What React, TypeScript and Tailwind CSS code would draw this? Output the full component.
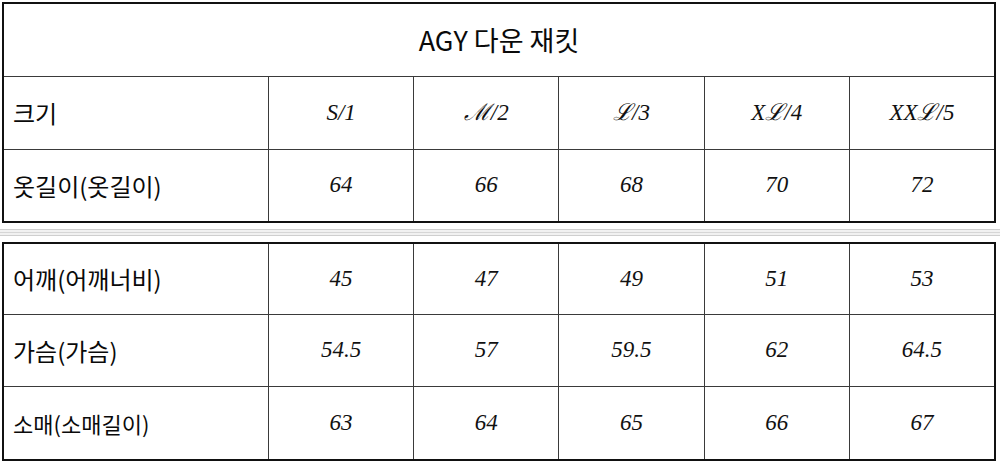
import React from 'react';

const sizes = ['S/1', 'ℳ/2', 'ℒ/3', 'Xℒ/4', 'XXℒ/5'];

const topRows = [{ label: '옷길이(옷길이)', values: ['64', '66', '68', '70', '72'] }];

const bottomRows = [
    { label: '어깨(어깨너비)', values: ['45', '47', '49', '51', '53'], h: 'h-[71px]' },
    { label: '가슴(가슴)', values: ['54.5', '57', '59.5', '62', '64.5'], h: 'h-[72px]' },
    { label: '소매(소매길이)', values: ['63', '64', '65', '66', '67'], h: 'h-[72px]', small: true },
];

const sans = "font-['Noto_Sans_CJK_KR','Noto_Sans',sans-serif]";
const serif = "font-['Liberation_Serif','DejaVu_Serif',serif] italic";

const Row: React.FC<{ label: string; values: string[]; h: string; last?: boolean; small?: boolean }> = ({
    label,
    values,
    h,
    last = false,
    small = false,
}) => (
    <div className={`grid grid-cols-[264px_repeat(5,1fr)] ${h} ${last ? '' : 'border-b border-[#3a3a3a]'}`}>
        <div className={`flex items-center pl-[9px] ${sans} ${small ? 'text-[22px]' : 'text-[24px]'} text-[#0a0a0a]`}>
            {label}
        </div>
        {values.map((v) => (
            <div
                key={v + label}
                className={`flex items-center justify-center border-l border-[#3a3a3a] ${serif} text-[23px] text-[#111]`}
            >
                {v}
            </div>
        ))}
    </div>
);

export default function App() {
    return (
        <div className="w-[1000px] h-[468px] bg-white pt-[2px] pl-[2px]">
            <div className="w-[994px] border-2 border-[#111]">
                <div
                    className={`h-[73px] flex items-center justify-center border-b border-[#3a3a3a] ${sans} text-[27px] text-[#0a0a0a]`}
                >
                    AGY 다운 재킷
                </div>
                <Row label="크기" values={sizes} h="h-[73px]" />
                {topRows.map((r) => (
                    <Row key={r.label} label={r.label} values={r.values} h="h-[71px]" last />
                ))}
            </div>
            <div className="h-[19px] -ml-[2px] w-[1000px] flex flex-col justify-center">
                <div className="h-[7px] border-y border-[#cfcfcf] bg-[#f1f1f1] flex flex-col justify-center">
                    <div className="h-px bg-[#d6d6d6]" />
                </div>
            </div>
            <div className="w-[994px] border-2 border-[#111]">
                {bottomRows.map((r, i) => (
                    <Row
                        key={r.label}
                        label={r.label}
                        values={r.values}
                        h={r.h}
                        small={r.small}
                        last={i === bottomRows.length - 1}
                    />
                ))}
            </div>
        </div>
    );
}
